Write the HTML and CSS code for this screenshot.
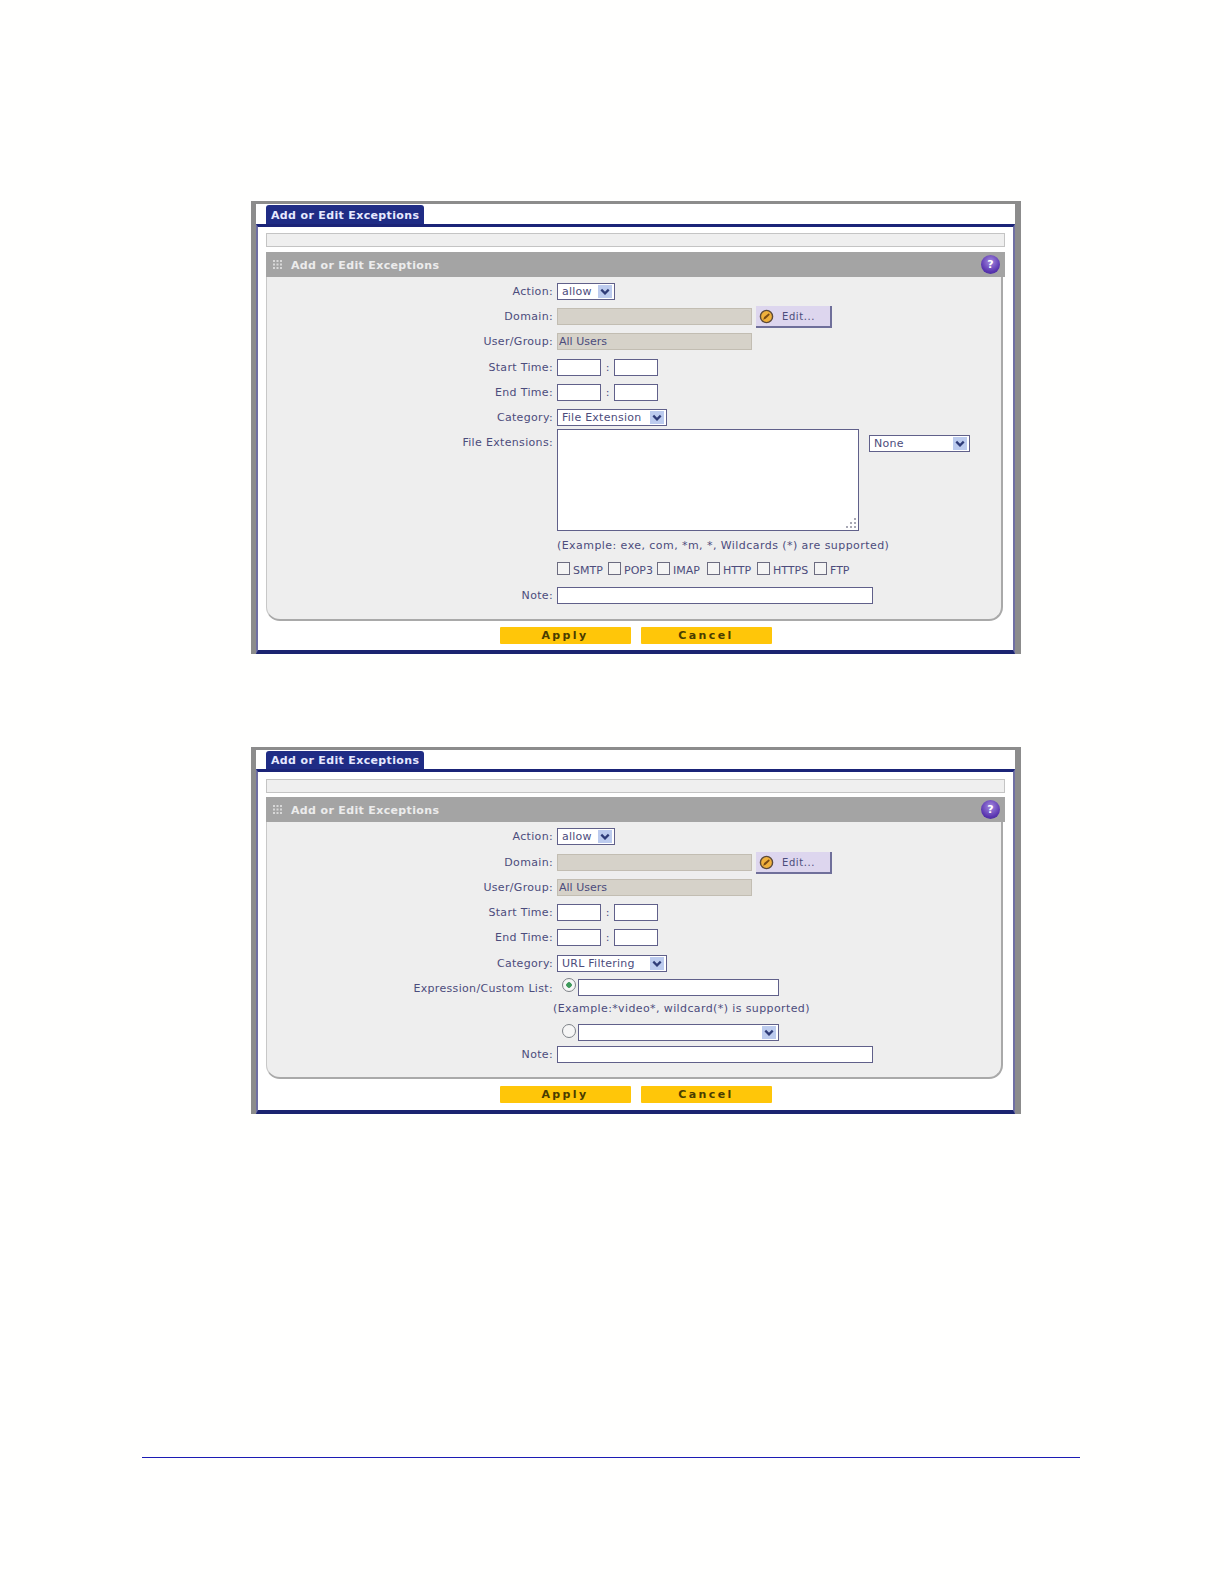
FILE: index.html
```html
<!DOCTYPE html>
<html>
<head>
	<title>Add or Edit Exceptions</title>
	<meta charset="utf-8">
	<link rel="stylesheet" href="styles.css">
</head>
<body>
	<svg class="defs" width="0" height="0">
		<symbol id="chevron" viewBox="0 0 14 14"><path d="M3 5l4 4 4-4" fill="none" stroke="#2f3c78" stroke-width="2.4"/></symbol>
		<symbol id="dots" viewBox="0 0 9 9"><path d="M0 0h2v2H0zM3.500 0h2v2h-2zM7 0h2v2H7zM0 3.500h2v2H0zM3.500 3.500h2v2h-2zM7 3.500h2v2H7zM0 7h2v2H0zM3.500 7h2v2h-2zM7 7h2v2H7z" fill="#d8d8d8"/></symbol>
		<symbol id="grip" viewBox="0 0 12 12"><path d="M9 1h2v2H9zM5 5h2v2H5zM9 5h2v2H9zM1 9h2v2H1zM5 9h2v2H5zM9 9h2v2H9z" fill="#a8a8b4"/></symbol>
	</svg>

	<section class="window">
		<div class="tabs"><div class="tab">Add or Edit Exceptions</div></div>
		<div class="frame">
			<div class="notice"></div>
			<div class="section-head">
				<svg class="handle"><use href="#dots"/></svg>
				<h3>Add or Edit Exceptions</h3>
				<span class="help">?</span>
			</div>
			<div class="panel">
				<div class="row"><label>Action:</label><div class="field"><div class="select w-action"><span>allow</span><b class="arrow"><svg><use href="#chevron"/></svg></b></div></div></div>
				<div class="row"><label>Domain:</label><div class="field"><input class="w-long" type="text" disabled>
					<button class="edit"><svg class="edit-icon" viewBox="0 0 16 16"><circle cx="8" cy="8" r="6.500" fill="#f0b13c" stroke="#5c4a3a" stroke-width="1.500"/><path d="M4.500 11.500l1-3 5-4 1 1.500-4.500 4.500z" fill="#7a4a12"/></svg>Edit...</button></div></div>
				<div class="row row-tall"><label>User/Group:</label><div class="field"><input class="w-long" type="text" disabled value="All Users"></div></div>
				<div class="row"><label>Start Time:</label><div class="field"><input class="w-time" type="text"><span class="colon">:</span><input class="w-time" type="text"></div></div>
				<div class="row"><label>End Time:</label><div class="field"><input class="w-time" type="text"><span class="colon">:</span><input class="w-time" type="text"></div></div>
				<div class="row row-short"><label>Category:</label><div class="field"><div class="select w-cat"><span>File Extension</span><b class="arrow"><svg><use href="#chevron"/></svg></b></div></div></div>
				<div class="row row-area"><label>File Extensions:</label><div class="field"><div class="area-wrap"><textarea></textarea><svg class="grip"><use href="#grip"/></svg></div><div class="select w-none"><span>None</span><b class="arrow"><svg><use href="#chevron"/></svg></b></div></div></div>
				<div class="row row-example"><span></span><p class="hint">(Example: exe, com, *m, *, Wildcards (*) are supported)</p></div>
				<div class="row row-checks"><span></span><div class="checks">
					<input type="checkbox"><span class="c-smtp">SMTP</span>
					<input type="checkbox"><span class="c-pop">POP3</span>
					<input type="checkbox"><span class="c-imap">IMAP</span>
					<input type="checkbox"><span class="c-http">HTTP</span>
					<input type="checkbox"><span class="c-https">HTTPS</span>
					<input type="checkbox"><span>FTP</span>
				</div></div>
				<div class="row"><label>Note:</label><div class="field"><input class="w-note" type="text"></div></div>
			</div>
			<div class="buttons"><button class="action">Apply</button><button class="action">Cancel</button></div>
		</div>
	</section>

	<section class="window second">
		<div class="tabs"><div class="tab">Add or Edit Exceptions</div></div>
		<div class="frame">
			<div class="notice"></div>
			<div class="section-head">
				<svg class="handle"><use href="#dots"/></svg>
				<h3>Add or Edit Exceptions</h3>
				<span class="help">?</span>
			</div>
			<div class="panel">
				<div class="row row-tall"><label>Action:</label><div class="field"><div class="select w-action"><span>allow</span><b class="arrow"><svg><use href="#chevron"/></svg></b></div></div></div>
				<div class="row"><label>Domain:</label><div class="field"><input class="w-long" type="text" disabled>
					<button class="edit"><svg class="edit-icon" viewBox="0 0 16 16"><circle cx="8" cy="8" r="6.500" fill="#f0b13c" stroke="#5c4a3a" stroke-width="1.500"/><path d="M4.500 11.500l1-3 5-4 1 1.500-4.500 4.500z" fill="#7a4a12"/></svg>Edit...</button></div></div>
				<div class="row"><label>User/Group:</label><div class="field"><input class="w-long" type="text" disabled value="All Users"></div></div>
				<div class="row"><label>Start Time:</label><div class="field"><input class="w-time" type="text"><span class="colon">:</span><input class="w-time" type="text"></div></div>
				<div class="row row-tall"><label>End Time:</label><div class="field"><input class="w-time" type="text"><span class="colon">:</span><input class="w-time" type="text"></div></div>
				<div class="row row-cat2"><label>Category:</label><div class="field"><div class="select w-cat"><span>URL Filtering</span><b class="arrow"><svg><use href="#chevron"/></svg></b></div></div></div>
				<div class="row row-expr row-expr-first"><label>Expression/Custom List:</label><div class="field radio-field"><input type="radio" name="expr" checked><input class="w-expr" type="text"></div></div>
				<div class="row row-example2"><span></span><p class="hint hint-out">(Example:*video*, wildcard(*) is supported)</p></div>
				<div class="row row-expr"><span></span><div class="field radio-field"><input type="radio" name="expr"><div class="select w-expr"><span></span><b class="arrow"><svg><use href="#chevron"/></svg></b></div></div></div>
				<div class="row"><label>Note:</label><div class="field"><input class="w-note" type="text"></div></div>
			</div>
			<div class="buttons"><button class="action">Apply</button><button class="action">Cancel</button></div>
		</div>
	</section>

	<hr class="footer-rule">
</body>
</html>
```

FILE: styles.css
```css
html, body {
	margin: 0;
	padding: 0;
}

body {
	height: 1584px;
	overflow: hidden;
	padding-top: 201px;
	box-sizing: border-box;
	background-color: #fffffe;
	font-family: "DejaVu Sans", sans-serif;
	font-size: 11px;
	color: #4c4c7c;
}

.defs {
	position: absolute;
}

.window {
	box-sizing: border-box;
	width: 770px;
	margin-left: 251px;
	border-style: solid;
	border-color: #8c8c8c;
	border-width: 3px 6px 0 5px;
	background-color: white;
}

.second {
	margin-top: 93px;
}

.tabs {
	height: 20px;
	padding-left: 10px;
}

.second .tabs {
	height: 19px;
}

.tab {
	display: inline-block;
	width: 158px;
	height: 19px;
	margin-top: 1px;
	box-sizing: border-box;
	padding-left: 5px;
	border-radius: 3px 3px 0 0;
	background-color: #1f2c85;
	color: #e6e9ff;
	font-weight: bold;
	font-size: 11px;
	line-height: 21px;
	letter-spacing: 0.35px;
	white-space: nowrap;
}

.second .tab {
	height: 18px;
	line-height: 19px;
}

.frame {
	border-top: 3px solid #1b2478;
	border-left: 2px solid #6f6fa3;
	border-right: 2px solid #6f6fa3;
	border-bottom: 4px solid #1b2470;
	padding: 6px 8px 6px 8px;
}

.second .frame {
	padding-top: 7px;
	padding-bottom: 7px;
}

.notice {
	box-sizing: border-box;
	height: 14px;
	margin-bottom: 5px;
	border: 1px solid #c4c4c4;
	background-color: #efefef;
}

.second .notice {
	margin-bottom: 4px;
}

.section-head {
	display: flex;
	align-items: center;
	height: 25px;
	background-color: #a4a4a4;
}

.handle {
	width: 9px;
	height: 9px;
	margin: 0 9px 0 7px;
}

.section-head h3 {
	flex: 1;
	margin: 0;
	padding-top: 2px;
	font-size: 11px;
	letter-spacing: 0.35px;
	color: #ececec;
}

.help {
	width: 19px;
	height: 19px;
	margin-right: 5px;
	border-radius: 50%;
	background: radial-gradient(circle at 50% 35%, #a58be0, #5a35b0 65%, #3a2390);
	color: white;
	font-weight: bold;
	font-size: 11px;
	line-height: 19px;
	text-align: center;
}

.panel {
	margin-right: 2px;
	padding: 6px 0 7px 0;
	border-bottom: 2px solid #a9a9a9;
	border-right: 2px solid #a9a9a9;
	border-left: 1px solid #c8c8c8;
	border-radius: 0 0 14px 14px;
	background-color: #eeeeee;
}

.second .panel {
	padding-bottom: 6px;
}

.row {
	display: grid;
	grid-template-columns: 286px 1fr;
	column-gap: 4px;
	height: 25px;
}
.row-tall { height: 26px; }
.row-short { height: 20px; }
.row-area { height: 109px; }
.row-example { height: 24px; }
.row-checks { height: 25px; }
.row-cat2 { height: 24px; }
.row-expr { height: 22px; }
.row-example2 { height: 24px; }

.row-expr-first { height: 21px; }

.row label {
	text-align: right;
	line-height: 17px;
	white-space: nowrap;
	letter-spacing: 0.33px;
}

.row-area label {
	padding-top: 5px;
}

.row-expr label {
	padding-top: 1px;
}

.field {
	display: flex;
	align-items: flex-start;
}

input[type=text], textarea, .select {
	box-sizing: border-box;
	height: 17px;
	margin: 0;
	padding: 0 1px;
	border: 1px solid #60608a;
	border-radius: 0;
	background-color: white;
	font: inherit;
	color: inherit;
}

input[type=text]:disabled {
	border-color: #c2bdb2;
	background-color: #d6d2c9;
	color: #4c4c7c;
}

.w-long { width: 195px; }
.w-time { width: 44px; }
.w-note { width: 316px; }
.w-expr { width: 201px; }
.w-action { width: 58px; }
.w-cat { width: 110px; }
.w-none { width: 101px; margin: 6px 0 0 10px; }

.colon {
	width: 13px;
	text-align: center;
	line-height: 17px;
}

.area-wrap {
	position: relative;
	height: 102px;
}

textarea {
	display: block;
	width: 302px;
	height: 102px;
	resize: none;
}

.grip {
	position: absolute;
	right: 2px;
	bottom: 2px;
	width: 12px;
	height: 12px;
}

.select {
	display: flex;
	justify-content: space-between;
	align-items: center;
	padding: 0 2px 0 4px;
	line-height: 15px;
	letter-spacing: 0.25px;
}

.arrow {
	width: 14px;
	height: 13px;
	background-color: #bccbee;
}

.arrow svg {
	display: block;
	width: 14px;
	height: 13px;
}

.edit {
	display: flex;
	align-items: center;
	box-sizing: border-box;
	width: 76px;
	height: 22px;
	margin: -2px 0 0 4px;
	padding: 0 0 0 3px;
	border: none;
	border-right: 2px solid #6f6f9a;
	border-bottom: 2px solid #6f6f9a;
	background-color: #ddd6ee;
	font: inherit;
	font-size: 10px;
	letter-spacing: 0.6px;
	color: #4c4c7c;
}

.edit-icon {
	width: 15px;
	height: 15px;
	margin-right: 8px;
}

.hint {
	margin: 0;
	line-height: 15px;
	letter-spacing: 0.44px;
	white-space: nowrap;
}

.hint-out {
	margin-left: -4px;
	line-height: 18px;
	letter-spacing: 0.39px;
}

.checks {
	display: flex;
	align-items: center;
	height: 13px;
	white-space: nowrap;
}

.checks span {
	margin: 3px 0 0 3px;
	line-height: 13px;
}

.c-smtp { width: 35px; }
.c-pop { width: 33px; }
.c-imap { width: 34px; }
.c-http { width: 34px; }
.c-https { width: 41px; }

input[type=checkbox], input[type=radio] {
	appearance: none;
	-webkit-appearance: none;
	flex: none;
	box-sizing: border-box;
	margin: 0;
	border: 1px solid #6c6c80;
}

input[type=checkbox] {
	width: 13px;
	height: 13px;
	background-color: #f4f4f4;
}

input[type=radio] {
	width: 14px;
	height: 14px;
	margin: 0 2px 0 5px;
	border-color: #7e8288;
	border-radius: 50%;
	background-color: #f6f6f6;
}

input[type=radio]:checked {
	margin-top: -1px;
	background: radial-gradient(circle, #3f9a5c 0 2.500px, #f6f6f6 3px);
}

.buttons {
	display: flex;
	justify-content: center;
	gap: 10px;
	margin-top: 6px;
}

.second .buttons {
	margin-top: 7px;
}

.action {
	width: 131px;
	height: 17px;
	padding: 0;
	border: none;
	border-radius: 1px;
	background-color: #ffc609;
	font-family: inherit;
	font-size: 11px;
	font-weight: bold;
	line-height: 17px;
	letter-spacing: 2.400px;
	color: #4a3c00;
}

.footer-rule {
	width: 938px;
	height: 1px;
	margin: 343px 0 0 142px;
	border: none;
	background-color: #1c1cb4;
}
```
